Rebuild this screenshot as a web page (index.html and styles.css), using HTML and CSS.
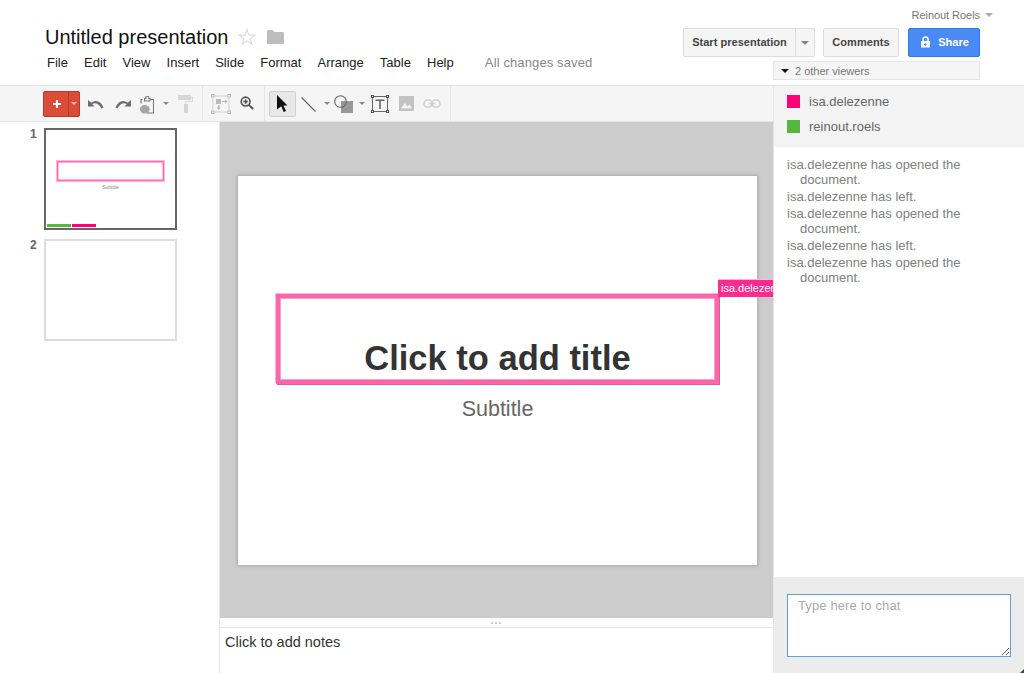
FILE: index.html
```html
<!DOCTYPE html>
<html lang="en">
<head>
<meta charset="utf-8">
<title>Untitled presentation</title>
<link rel="stylesheet" href="styles.css">
</head>
<body>
<div class="app">
  <header class="header">
    <div class="doc">
      <div class="title-row">
        <h1 class="doc-title">Untitled presentation</h1>
        <svg class="star" width="18" height="18" viewBox="0 0 18 18"><path d="M9 1.5l2 5.6h5.8l-4.7 3.5 1.800 5.700L9 12.800l-4.900 3.500 1.800-5.700L1.200 7.100H7z" fill="none" stroke="#ddd" stroke-width="1.100"/></svg>
        <svg class="folder" width="17" height="14" viewBox="0 0 17 14"><path d="M0 1.500q0-1.500 1.500-1.500h4l2 2h8q1.500 0 1.500 1.500V14H0z" fill="#bdbdbd"/></svg>
      </div>
      <nav class="menu">
        <span>File</span><span>Edit</span><span>View</span><span>Insert</span><span>Slide</span><span>Format</span><span>Arrange</span><span>Table</span><span>Help</span>
        <span class="saved">All changes saved</span>
      </nav>
    </div>
    <div class="actions">
      <div class="user">Reinout Roels<i class="caret caret-user"></i></div>
      <div class="buttons">
        <div class="split">
          <button class="btn btn-main">Start presentation</button><button class="btn btn-drop"><i class="caret caret-grey"></i></button>
        </div>
        <button class="btn btn-comments">Comments</button>
        <button class="btn-share">
          <svg width="11" height="12" viewBox="0 0 11 12"><path d="M3 5V3.500a2.500 2.500 0 0 1 5 0V5" fill="none" stroke="#fff" stroke-width="1.500"/><path fill-rule="evenodd" d="M1 5h9v6.500H1zM4.800 7v1H4v1h.8v1h1V9h.8V8h-.8V7z" fill="#fff"/></svg>
          Share
        </button>
      </div>
      <div class="viewers"><i class="caret caret-black"></i>2 other viewers</div>
    </div>
  </header>

  <div class="main">
    <div class="workspace">
      <div class="toolbar">
        <div class="tool-group group-a">
          <div class="new-btn"><span class="new-plus"><svg class="plus-icon" width="10" height="10" viewBox="0 0 10 10"><path d="M4 1h2v3h3v2H6v3H4V6H1V4h3z" fill="#fff"/></svg></span><span class="new-drop"><i class="caret caret-pale"></i></span></div>
          <svg class="ic ic-undo" width="16" height="10" viewBox="0 0 16 10"><path d="M0 1v6.500h6.500L4.300 5.300C6.800 3.500 10.500 4 13.500 9.500l2-1C12.500 2 8 .5 3.300 3.800z" fill="#6f6f6f"/></svg>
          <svg class="ic ic-redo" width="16" height="10" viewBox="0 0 16 10"><path d="M16 1v6.500H9.500l2.200-2.200C9.200 3.500 5.500 4 2.500 9.500l-2-1C3.500 2 8 .5 12.700 3.800z" fill="#6f6f6f"/></svg>
          <svg class="ic ic-paste" width="14" height="18" viewBox="0 0 14 18"><path d="M2.500 3.500H1v4M10 3.500h3.500V17H7" fill="none" stroke="#777" stroke-width="1.100"/><path d="M4.500 2.500h1.300V.8h3v1.700H10V5H4.500z" fill="none" stroke="#777" stroke-width="1.100"/><ellipse cx="4.800" cy="13.300" rx="4.800" ry="4.200" fill="#a6a6a6"/></svg>
          <i class="caret caret-grey caret-paste"></i>
          <svg class="ic ic-roller" width="15" height="18" viewBox="0 0 15 18"><path d="M0 0h13v2h2v5H8.500v2H10v9H6V9h1.500V6H14V3h-1v2H0z" fill="#d6d6d6"/></svg>
        </div>
        <div class="tool-group group-b">
          <svg class="ic ic-arrange" width="20" height="20" viewBox="0 0 20 20"><rect x="2" y="2" width="16" height="16" fill="none" stroke="#cfcfcf"/><g fill="#fff" stroke="#bbb"><rect x=".5" y=".5" width="2.500" height="2.500"/><rect x="17" y=".5" width="2.500" height="2.500"/><rect x=".5" y="17" width="2.500" height="2.500"/><rect x="17" y="17" width="2.500" height="2.500"/></g><rect x="5" y="5" width="5" height="5" fill="#bbb"/><path d="M11 7h3V5l2.500 2.500L14 10V8h-3zM7 11h1.500v2.500H10L7.700 16 5.500 13.500H7z" fill="#bbb"/></svg>
          <svg class="ic ic-zoom" width="15" height="15" viewBox="0 0 15 15"><circle cx="6" cy="6" r="4.700" fill="none" stroke="#555" stroke-width="1.800"/><path d="M5.200 3.500h1.600v1.700h1.700v1.600H6.800v1.700H5.200V6.800H3.500V5.200h1.700z" fill="#555"/><path d="M9.500 9.500L14 14" stroke="#555" stroke-width="2.200"/></svg>
        </div>
        <div class="tool-group group-c">
          <div class="select-btn"><svg width="11" height="17" viewBox="0 0 11 17"><path d="M0 0l10.500 10.500H6.500L9 16l-2.300 1-2.400-5.700L0 14.500z" fill="#111"/></svg></div>
          <svg class="ic ic-line" width="15" height="15" viewBox="0 0 15 15"><path d="M.5.500l14 14" stroke="#666" stroke-width="1.100"/></svg>
          <i class="caret caret-grey caret-line"></i>
          <svg class="ic ic-shape" width="20" height="19" viewBox="0 0 20 19"><rect x="7" y="6" width="12" height="12" fill="#999"/><circle cx="6.500" cy="6.500" r="5.800" fill="none" stroke="#666" stroke-width="1.100"/></svg>
          <i class="caret caret-grey caret-shape"></i>
          <svg class="ic ic-text" width="18" height="18" viewBox="0 0 18 18"><rect x="1.500" y="1.500" width="15" height="15" fill="none" stroke="#666"/><g fill="#fff" stroke="#555"><rect x=".5" y=".5" width="2" height="2"/><rect x="15.500" y=".5" width="2" height="2"/><rect x=".5" y="15.500" width="2" height="2"/><rect x="15.500" y="15.500" width="2" height="2"/></g><path d="M4.500 4.500h9v1.600h-3.700v8H8.200v-8H4.500z" fill="#666"/></svg>
          <svg class="ic ic-image" width="15" height="15" viewBox="0 0 15 15"><path fill-rule="evenodd" d="M0 0h15v15H0zM2 12.500h11L10.500 8.500l-2 2-2.700-3.500z" fill="#c2c2c2"/></svg>
          <svg class="ic ic-link" width="18" height="9" viewBox="0 0 18 9"><rect x="1" y="1" width="8" height="7" rx="3.500" fill="none" stroke="#d0d0d0" stroke-width="1.600"/><rect x="9" y="1" width="8" height="7" rx="3.500" fill="none" stroke="#d0d0d0" stroke-width="1.600"/><path d="M6 4.500h6" stroke="#d0d0d0" stroke-width="1.600"/></svg>
        </div>
      </div>

      <div class="work">
        <aside class="film">
          <div class="film-item">
            <span class="film-num">1</span>
            <div class="thumb thumb-active">
              <div class="thumb-box"></div>
              <div class="thumb-sub">Subtitle</div>
              <div class="thumb-bars"><i class="bar bar-green"></i><i class="bar bar-pink"></i></div>
            </div>
          </div>
          <div class="film-item">
            <span class="film-num">2</span>
            <div class="thumb"></div>
          </div>
        </aside>
        <div class="editor">
          <div class="canvas">
            <div class="slide">
              <div class="title-box">
                <span class="title-text">Click to add title</span>
                <span class="collab-tag">isa.delezenne</span>
              </div>
              <div class="subtitle">Subtitle</div>
            </div>
          </div>
          <div class="splitter"><i class="dot"></i><i class="dot"></i><i class="dot"></i></div>
          <div class="notes">Click to add notes</div>
        </div>
      </div>
    </div>

    <aside class="side">
      <ul class="people">
        <li><i class="swatch swatch-pink"></i>isa.delezenne</li>
        <li><i class="swatch swatch-green"></i>reinout.roels</li>
      </ul>
      <div class="log">
        <p>isa.delezenne has opened the document.</p>
        <p>isa.delezenne has left.</p>
        <p>isa.delezenne has opened the document.</p>
        <p>isa.delezenne has left.</p>
        <p>isa.delezenne has opened the document.</p>
      </div>
      <div class="chat">
        <textarea class="chat-input" placeholder="Type here to chat"></textarea>
      </div>
    </aside>
  </div>
  <i class="window-grip"></i>
</div>
</body>
</html>
```

FILE: styles.css
```css
* { box-sizing: border-box; }
html, body { margin: 0; height: 100%; overflow: hidden; }
body { font-family: "Liberation Sans", Arial, sans-serif; font-size: 13px; color: #222; background: #fff; }
i { display: block; }
.app { position: relative; display: flex; flex-direction: column; width: 1024px; height: 673px; }
.window-grip { position: absolute; right: 0; bottom: 0; width: 0; height: 0; border-style: solid; border-width: 0 0 4px 4px; border-color: transparent transparent #444 transparent; }

/* Header */
.header { flex: 0 0 86px; display: flex; justify-content: space-between; border-bottom: 1px solid #e5e5e5; }
.doc { padding: 25px 0 0 45px; }
.title-row { display: flex; align-items: center; height: 24px; }
.doc-title { margin: 0; font-size: 20px; font-weight: 400; line-height: 24px; color: #111; }
.star { margin-left: 10px; }
.folder { margin-left: 11px; margin-top: -1px; }
.menu { display: flex; gap: 16.100px; margin: 6px 0 0 2px; line-height: 16px; color: #222; }
.saved { margin-left: 15px; letter-spacing: .12px; color: #888; }
.actions { display: flex; flex-direction: column; align-items: flex-end; padding-right: 44px; }
.user { display: flex; align-items: center; height: 12px; margin: 9px -13px 0 0; font-size: 11px; letter-spacing: -.05px; color: #777; }
.caret { width: 0; height: 0; border-style: solid; border-color: transparent; border-width: 4px 4px 0; }
.caret-user { margin-left: 5px; border-top-color: #aaa; }
.caret-grey { border-width: 3px 3px 0; border-top-color: #888; }
.caret-pale { border-width: 3px 3px 0; border-top-color: #f5c5bd; }
.caret-black { border-width: 4px 4px 0; border-top-color: #111; margin-right: 6px; }
.buttons { display: flex; margin-top: 7px; }
.btn { height: 29px; padding: 0 0 2px; border: 1px solid #dcdcdc; border-radius: 2px; background: #f5f5f5; font: 700 11px "Liberation Sans", Arial, sans-serif; letter-spacing: .03px; color: #444; }
.split { display: flex; }
.btn-main { width: 113px; border-radius: 2px 0 0 2px; }
.btn-drop { display: flex; align-items: center; justify-content: center; width: 20px; margin-left: -1px; padding: 0; border-radius: 0 2px 2px 0; }
.btn-drop .caret { border-width: 4px 4px 0; }
.btn-comments { width: 76px; margin-left: 8px; letter-spacing: .1px; }
.btn-share { display: flex; align-items: center; justify-content: center; gap: 7px; width: 72px; height: 29px; margin-left: 9px; padding: 0 0 1px 1px; border: 1px solid #3079ed; border-radius: 2px; background: #4a8af4; font: 700 11px "Liberation Sans", Arial, sans-serif; color: #fff; }
.viewers { display: flex; align-items: center; width: 207px; height: 19px; margin-top: 4px; padding-left: 7px; border: 1px solid #e5e5e5; background: #f5f5f5; font-size: 11px; color: #777; }

/* Main */
.main { flex: 1; display: flex; min-height: 0; }
.workspace { flex: 1; display: flex; flex-direction: column; min-width: 0; }

/* Toolbar */
.toolbar { flex: 0 0 36px; display: flex; background: #f5f5f5; border-bottom: 1px solid #e5e5e5; }
.tool-group { position: relative; display: flex; align-items: center; height: 35px; border-right: 1px solid #e5e5e5; }
.group-a { width: 203px; padding-left: 43px; }
.group-b { width: 62px; padding-left: 8px; }
.group-c { width: 186px; padding-left: 4px; }
.new-btn { display: flex; width: 37px; height: 26px; border: 1px solid #b93a2a; border-radius: 2px; background: #dd4b39; }
.new-plus { display: flex; align-items: center; justify-content: center; width: 25px; border-right: 1px solid #b93a2a; }
.plus-icon { margin-left: 1px; }
.new-drop { display: flex; align-items: center; justify-content: center; flex: 1; }
.ic { flex: none; }
.ic-undo { margin-left: 8px; margin-top: 1px; }
.ic-redo { margin-left: 11px; margin-top: 1px; }
.ic-paste { margin-left: 9px; margin-top: 2px; }
.caret-paste { margin-left: 9px; }
.ic-roller { margin-left: 9px; }
.ic-zoom { width: 14px; height: 14px; margin-left: 9px; margin-top: -2px; }
.select-btn { display: flex; align-items: center; justify-content: center; width: 27px; height: 26px; border: 1px solid #d0d0d0; border-radius: 2px; background: #e8e8e8; }
.ic-line { margin-left: 5px; margin-top: 1px; }
.caret-line { margin-left: 8px; }
.ic-shape { margin-left: 4px; margin-top: 1px; }
.caret-shape { margin-left: 5px; }
.ic-text { margin-left: 6px; margin-top: 1px; }
.ic-image { margin-left: 10px; }
.ic-link { margin-left: 9px; }

/* Work area */
.work { flex: 1; display: flex; min-height: 0; }
.film { flex: 0 0 220px; padding-top: 6px; border-right: 1px solid #e5e5e5; }
.film-item { display: flex; height: 111px; padding-left: 30px; }
.film-num { width: 14px; font-size: 12px; font-weight: 700; line-height: 12px; color: #666; }
.thumb { position: relative; width: 133px; height: 102px; border: 2px solid #ddd; }
.thumb-active { padding: 30px 0 0 10px; border-color: #666; }
.thumb-box { width: 109px; height: 22px; border: 1px solid #ffb8da; box-shadow: inset 0 0 0 1.400px #ff68b2; }
.thumb-sub { width: 109px; margin-top: 2px; font-size: 5px; line-height: 6px; text-align: center; color: #888; }
.thumb-bars { position: absolute; left: 1px; bottom: 1px; display: flex; gap: 1px; }
.bar { width: 24px; height: 3px; }
.bar-green { background: #57b540; }
.bar-pink { background: #ff0076; }

.editor { flex: 1; display: flex; flex-direction: column; min-width: 0; }
.canvas { flex: 1; display: flex; align-items: center; justify-content: center; padding: 1px 0 0 2px; overflow: hidden; background: #ccc; }
.slide { flex: none; width: 519px; height: 389px; padding: 118px 0 0 38px; background: #fff; box-shadow: 0 0 3px 1px #a8a8a8; }
.title-box { position: relative; display: flex; align-items: flex-end; justify-content: center; width: 443px; height: 90px; padding-bottom: 2px; border: 4px solid #fb66a8; box-shadow: -1px -1px 0 0 #ffb4d4, 1px 1px 0 0 #e0589a, inset 0 0 0 1px #ff9cca; }
.title-text { font-size: 34.500px; font-weight: 700; line-height: 40px; white-space: nowrap; color: #333; }
.collab-tag { position: absolute; left: 438px; top: -18px; width: 120px; height: 17px; padding: 2px 0 0 3px; background: #ff2a90; box-shadow: 0 -1px 0 #ffb4d4; font-size: 11px; line-height: 13px; color: #fff; }
.subtitle { width: 443px; margin-top: 12px; font-size: 21.500px; line-height: 26px; text-align: center; color: #666; }
.splitter { flex: 0 0 10px; display: flex; align-items: center; justify-content: center; gap: 2px; padding-right: 2px; border-bottom: 1px solid #e5e5e5; }
.dot { width: 2px; height: 2px; background: #ccc; }
.notes { flex: 0 0 45px; padding: 6px 0 0 5px; font-size: 14.500px; line-height: 16px; color: #333; }

/* Sidebar */
.side { flex: 0 0 251px; display: flex; flex-direction: column; border-left: 1px solid #e5e5e5; }
.people { margin: 0; padding: 3px 0 8px 13px; list-style: none; background: #f3f3f3; color: #666; }
.people li { display: flex; align-items: center; height: 25px; }
.swatch { width: 13px; height: 13px; margin-right: 9px; }
.swatch-pink { background: #ff0076; }
.swatch-green { background: #57b540; }
.log { flex: 1; padding: 10px 50px 0 13px; color: #808080; }
.log p { margin: 0 0 2px; padding-left: 13px; text-indent: -13px; line-height: 15px; }
.chat { flex: 0 0 96px; padding: 17px 13px 0; background: #ececec; }
.chat-input { display: block; width: 224px; height: 63px; padding: 3px 10px; border: 1px solid #5a9fe8; border-radius: 0; outline: 0; background: #fff; font: 13px/15px "Liberation Sans", Arial, sans-serif; letter-spacing: .12px; color: #333; }
.chat-input::placeholder { color: #aaa; }
```
